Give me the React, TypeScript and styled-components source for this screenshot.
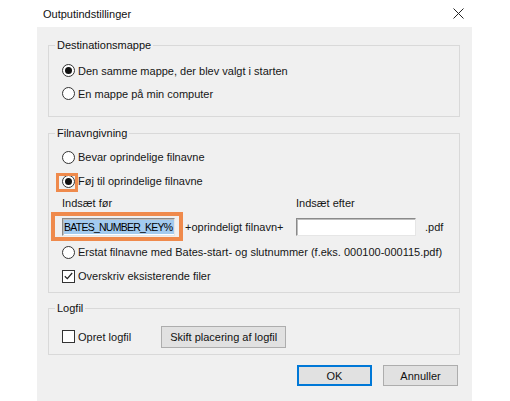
import React from 'react';
import styled, { createGlobalStyle } from 'styled-components';

const GlobalStyle = createGlobalStyle`
  html, body {
    margin: 0;
    padding: 0;
    background: #fff;
  }
  body {
    font-family: 'Liberation Sans', Arial, sans-serif;
    font-size: 11px;
    color: #161616;
  }
`;

const Page = styled.div`
  display: flex;
  padding-left: 37px;
  min-height: 401px;
  overflow: hidden;
`;

const Dialog = styled.div`
  width: 435px;
  display: flex;
  flex-direction: column;
`;

const TitleBar = styled.div`
  height: 27px;
  display: flex;
  align-items: center;
  justify-content: space-between;
  padding: 0 8px 0 6px;
  background: #fff;
`;

const Title = styled.span`
  color: #111;
`;

const CloseButton = styled.span`
  display: flex;
  width: 11px;
  height: 11px;
  margin-bottom: 1px;
`;

const Body = styled.div`
  flex: 1;
  background: #f0f0f0;
  padding: 10px 12px 20px 11px;
  display: flex;
  flex-direction: column;
`;

const Group = styled.fieldset<{ $pt: number; $pb: number; $mt?: number }>`
  margin: ${(p) => p.$mt ?? 0}px 0 0 0;
  min-width: 0;
  border: 1px solid #d9d9d9;
  padding: ${(p) => p.$pt}px 12px ${(p) => p.$pb}px 13px;
  display: flex;
  flex-direction: column;
`;

const Legend = styled.legend`
  padding: 0 2px;
  margin-left: -7px;
  line-height: 16px;
  color: #111;
`;

const Row = styled.div<{ $h: number }>`
  height: ${(p) => p.$h}px;
  display: flex;
  align-items: center;
  gap: 3px;
  white-space: nowrap;
`;

const Mark = styled.span`
  position: relative;
  display: flex;
  flex-shrink: 0;
`;

const Highlight = styled.span<{ $t: number; $r: number; $b: number; $l: number; $w: number }>`
  position: absolute;
  top: ${(p) => p.$t}px;
  right: ${(p) => p.$r}px;
  bottom: ${(p) => p.$b}px;
  left: ${(p) => p.$l}px;
  border: ${(p) => p.$w}px solid #ef8a4c;
  pointer-events: none;
`;

const RadioCircle = styled.span<{ $checked?: boolean }>`
  flex-shrink: 0;
  width: 13px;
  height: 13px;
  box-sizing: border-box;
  border-radius: 50%;
  border: 1px solid #333;
  background: #fff;
  display: flex;
  align-items: center;
  justify-content: center;
  &::after {
    content: '';
    width: 7px;
    height: 7px;
    border-radius: 50%;
    background: #111;
    display: ${(p) => (p.$checked ? 'block' : 'none')};
  }
`;

const CheckBox = styled.span`
  flex-shrink: 0;
  width: 13px;
  height: 13px;
  box-sizing: border-box;
  border: 1px solid #333;
  background: #fff;
  display: flex;
  align-items: center;
  justify-content: center;
`;

const FieldGrid = styled.div`
  display: grid;
  grid-template-columns: 113px 121px 120px auto;
  grid-template-rows: 20px 27px;
  align-items: center;
  white-space: nowrap;
`;

const Caption = styled.span<{ $pad?: number }>`
  padding-left: ${(p) => p.$pad ?? 0}px;
`;

const Field = styled.div`
  position: relative;
  height: 18px;
  box-sizing: border-box;
  background: #fff;
  border: 1px solid;
  border-color: #8a8a8a #e6e6e6 #e6e6e6 #8a8a8a;
  box-shadow: inset 1px 1px 0 #bdbdbd;
  display: flex;
  align-items: center;
  padding-left: 1px;
`;

const Selected = styled.span`
  background: #a3cbef;
  line-height: 14px;
  font-size: 10.5px;
  letter-spacing: -0.75px;
  padding-right: 2px;
  color: #000;
`;

const Button = styled.button<{ $primary?: boolean }>`
  flex-shrink: 0;
  height: 21px;
  box-sizing: border-box;
  font-family: inherit;
  font-size: 11px;
  color: #111;
  background: #e1e1e1;
  border: 1px solid ${(p) => (p.$primary ? '#0078d7' : '#adadad')};
  box-shadow: ${(p) => (p.$primary ? 'inset 0 0 0 1px #0078d7' : 'none')};
  padding: 0;
  width: 75px;
`;

const WideButton = styled(Button)`
  width: 125px;
  height: 22px;
  margin-left: 27px;
`;

const Actions = styled.div`
  display: flex;
  justify-content: flex-end;
  gap: 11px;
  margin-top: 10px;
  padding-right: 2px;
`;

const Radio = ({ checked, label }: { checked?: boolean; label: string }) => (
  <Row $h={23}>
    <RadioCircle $checked={checked} />
    <span>{label}</span>
  </Row>
);

const Tick = () => (
  <svg width="9" height="8" viewBox="0 0 9 8">
    <path d="M0.8 4.2 L3.3 6.6 L8.2 1" fill="none" stroke="#222" strokeWidth="1.2" />
  </svg>
);

export default function App() {
  return (
    <>
      <GlobalStyle />
      <Page>
        <Dialog>
          <TitleBar>
            <Title>Outputindstillinger</Title>
            <CloseButton>
              <svg width="11" height="11" viewBox="0 0 11 11">
                <path d="M0.5 0.5 L10.5 10.5 M10.5 0.5 L0.5 10.5" stroke="#222" strokeWidth="1" />
              </svg>
            </CloseButton>
          </TitleBar>
          <Body>
            <Group $pt={6} $pb={11}>
              <Legend>Destinationsmappe</Legend>
              <Radio checked label="Den samme mappe, der blev valgt i starten" />
              <Radio label="En mappe på min computer" />
            </Group>

            <Group $pt={4} $pb={4} $mt={8}>
              <Legend>Filnavngivning</Legend>
              <Row $h={24}>
                <RadioCircle />
                <span>Bevar oprindelige filnavne</span>
              </Row>
              <Row $h={24}>
                <Mark>
                  <RadioCircle $checked />
                  <Highlight $t={-2} $r={-3} $b={-4} $l={-6} $w={3} />
                </Mark>
                <span>Føj til oprindelige filnavne</span>
              </Row>
              <FieldGrid>
                <Caption>Indsæt før</Caption>
                <span />
                <Caption>Indsæt efter</Caption>
                <span />
                <Field>
                  <Selected>BATES_NUMBER_KEY%</Selected>
                  <Highlight $t={-7} $r={-9} $b={-6} $l={-12} $w={4} />
                </Field>
                <Caption $pad={10}>+oprindeligt filnavn+</Caption>
                <Field />
                <Caption $pad={9}>.pdf</Caption>
              </FieldGrid>
              <Row $h={24}>
                <RadioCircle />
                <span>Erstat filnavne med Bates-start- og slutnummer (f.eks. 000100-000115.pdf)</span>
              </Row>
              <Row $h={24}>
                <CheckBox>
                  <Tick />
                </CheckBox>
                <span>Overskriv eksisterende filer</span>
              </Row>
            </Group>

            <Group $pt={9} $pb={6} $mt={7}>
              <Legend>Logfil</Legend>
              <Row $h={23}>
                <CheckBox />
                <span>Opret logfil</span>
                <WideButton>Skift placering af logfil</WideButton>
              </Row>
            </Group>

            <Actions>
              <Button $primary>OK</Button>
              <Button>Annuller</Button>
            </Actions>
          </Body>
        </Dialog>
      </Page>
    </>
  );
}
